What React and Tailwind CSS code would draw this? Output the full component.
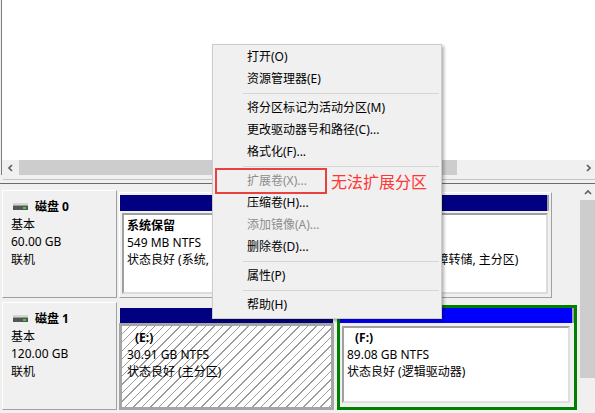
import React from "react";

const menuItems = [
  { label: "打开(O)" },
  { label: "资源管理器(E)" },
  { sep: true },
  { label: "将分区标记为活动分区(M)" },
  { label: "更改驱动器号和路径(C)..." },
  { label: "格式化(F)..." },
  { sep: true },
  { label: "扩展卷(X)...", disabled: true },
  { label: "压缩卷(H)..." },
  { label: "添加镜像(A)...", disabled: true },
  { label: "删除卷(D)..." },
  { sep: true },
  { label: "属性(P)" },
  { sep: true },
  { label: "帮助(H)" },
];

function Chevron({ dir }) {
  const pts = {
    left: "5,1 2,4 5,7",
    right: "3,1 6,4 3,7",
    up: "1,6 4,3 7,6",
  };
  return (
    <svg width="8" height="8" viewBox="0 0 8 8">
      <polyline points={pts[dir]} fill="none" stroke="#606060" strokeWidth="1.7" />
    </svg>
  );
}

function DiskIcon() {
  return (
    <svg width="15" height="7" viewBox="0 0 15 7" className="ml-[2px]">
      <rect x="0" y="0" width="15" height="2" fill="#d4d4d4" />
      <rect x="0" y="2" width="15" height="1" fill="#9a9a9a" />
      <rect x="0" y="3" width="15" height="4" fill="#555555" />
      <rect x="10" y="4" width="3" height="2" fill="#35d335" />
    </svg>
  );
}

function DiskLabel({ name, size }) {
  return (
    <div className="w-[115px] shrink-0 border border-t-white border-l-white border-r-[#a0a0a0] border-b-[#a0a0a0] pl-[8px] pt-[7px] leading-[17.5px]">
      <div className="flex items-center gap-[7px]">
        <DiskIcon />
        <span className="font-bold">{name}</span>
      </div>
      <div>基本</div>
      <div>{size}</div>
      <div>联机</div>
    </div>
  );
}

function Lines({ title, size, status, indent }) {
  return (
    <>
      <div className={`font-bold ${indent ? "pl-[8px]" : ""}`}>{title}</div>
      <div>{size}</div>
      <div>{status}</div>
    </>
  );
}

export default function App() {
  return (
    <div className="w-[595px] h-[413px] overflow-hidden relative bg-[#f0f0f0] text-[12px] text-black font-['Noto_Sans','Noto_Sans_CJK_SC',sans-serif]">
      {/* upper pane */}
      <div className="h-[160px] bg-white ml-px border-l border-[#7d7d7d]" />

      {/* horizontal scrollbar */}
      <div className="h-[15px] flex ml-px border-l border-[#7d7d7d]">
        <div className="w-[17px] flex items-center justify-center">
          <Chevron dir="left" />
        </div>
        <div className="w-[438px] bg-[#cdcdcd]" />
        <div className="flex-1" />
        <div className="w-[15px] flex items-center justify-center">
          <Chevron dir="right" />
        </div>
      </div>

      {/* splitter */}
      <div className="h-[4px]" />
      <div className="h-px bg-[#c4c4c4] ml-[3px]" />
      <div className="h-[3px]" />
      <div className="h-px bg-[#6b6b6b]" />

      {/* lower pane */}
      <div className="h-[229px] flex">
        <div className="w-[580px] flex flex-col pt-[6px] pl-[2px] gap-[4px]">
          {/* Disk 0 */}
          <div className="h-[108px] flex">
            <DiskLabel name="磁盘 0" size="60.00 GB" />
            <div className="ml-[2px] mt-[2px] w-[433px] flex border border-t-white border-l-white border-r-[#a0a0a0] border-b-[#a0a0a0] pt-[2px] pb-[3px]">
              <div className="w-[159px] flex flex-col">
                <div className="h-[16px] bg-[#000080] border-r-2 border-[#a0a0a0]" />
                <div className="flex-1 mt-[2px] ml-[2px] bg-white border-2 border-t-[#a0a0a0] border-l-[#a0a0a0] border-r-[#dcdcdc] border-b-[#dcdcdc] pl-[3px] pt-[2px] leading-[17px] whitespace-nowrap overflow-hidden">
                  <Lines title="系统保留" size="549 MB NTFS" status="状态良好 (系统, 活动, 主分区)" />
                </div>
              </div>
              <div className="flex-1 flex flex-col pr-[2px]">
                <div className="h-[16px] bg-[#000080] border-r-2 border-[#a0a0a0]" />
                <div className="flex-1 mt-[2px] ml-[3px] mr-px bg-white border-2 border-t-[#a0a0a0] border-l-[#a0a0a0] border-r-[#dcdcdc] border-b-[#dcdcdc] pl-[1px] pt-[2px] leading-[17px] whitespace-nowrap overflow-hidden">
                  <Lines title="(C:)" indent size="59.46 GB NTFS" status="状态良好 (启动, 页面文件, 故障转储, 主分区)" />
                </div>
              </div>
            </div>
          </div>

          {/* Disk 1 */}
          <div className="h-[108px] flex">
            <DiskLabel name="磁盘 1" size="120.00 GB" />
            <div className="ml-[2px] w-[215px] flex flex-col pt-[6px]">
              <div className="h-[15px] mx-px bg-[#000080]" />
              <div className="flex-1 border-[3px] border-[#a5a5a5] bg-[repeating-linear-gradient(135deg,#ffffff_0px,#ffffff_5px,#9c9c9c_5px,#9c9c9c_6px)] pl-[5px] pt-[3px] leading-[17px] whitespace-nowrap">
                <Lines title="(E:)" indent size="30.91 GB NTFS" status="状态良好 (主分区)" />
              </div>
            </div>
            <div className="ml-[3px] mt-[3px] w-[240px] flex flex-col border-[3px] border-[#008000]">
              <div className="h-[15px] bg-[#0000ff] border-r-2 border-[#a0a0a0]" />
              <div className="flex-1 p-[2px] pt-[3px] pr-[4px] pb-[4px]">
                <div className="h-full bg-white border-2 border-t-[#a0a0a0] border-l-[#a0a0a0] border-r-[#e0e0e0] border-b-[#e0e0e0] pl-[3px] pt-[1px] leading-[17px] whitespace-nowrap">
                  <Lines title="(F:)" indent size="89.08 GB NTFS" status="状态良好 (逻辑驱动器)" />
                </div>
              </div>
            </div>
          </div>
        </div>

        {/* vertical scrollbar */}
        <div className="w-[15px] flex flex-col">
          <div className="h-[16px] flex items-center justify-center">
            <Chevron dir="up" />
          </div>
          <div className="h-[178px] bg-[#cdcdcd]" />
          <div className="flex-1" />
        </div>
      </div>

      {/* context menu */}
      <div className="absolute left-[212px] top-[44px] w-[230px] bg-[#f0f0f0] border border-[#cccccc] pt-px pb-[2px] shadow-[2px_2px_3px_rgba(0,0,0,0.3)]">
        {menuItems.map((it, i) =>
          it.sep ? (
            <div key={i} className="h-[7px] flex items-center ml-[30px] mr-[2px]">
              <div className="h-px w-full bg-[#d5d5d5]" />
            </div>
          ) : (
            <div
              key={i}
              className={`h-[22px] flex items-center pl-[34px] ${it.disabled ? "text-[#8d8d8d]" : "text-black"}`}
            >
              {it.label}
            </div>
          )
        )}
      </div>

      {/* annotation */}
      <div className="absolute left-[215px] top-[168px] w-[112px] h-[26px] border-2 border-[#e8413f]" />
      <div className="absolute left-[331px] top-[172px] text-[16px] leading-[20px] text-[#ff3636] whitespace-nowrap">
        无法扩展分区
      </div>
    </div>
  );
}
